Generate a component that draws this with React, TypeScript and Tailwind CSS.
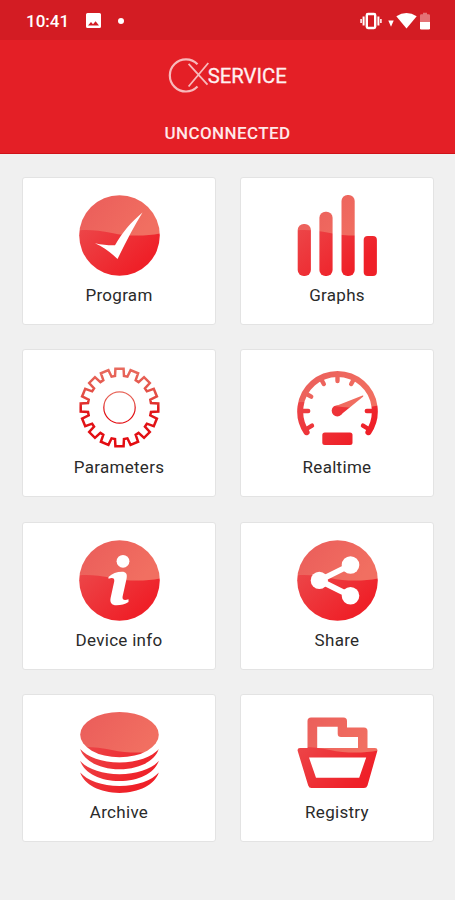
import { useId } from "react";
import type { ReactNode } from "react";

// Fills whatever the mask lets through with the two-tone red gloss.
function GlossIcon({ children }: { children: ReactNode }) {
  const id = useId();
  return (
    <svg width="81" height="81" viewBox="0 0 81 81" aria-hidden="true">
      <defs>
        <linearGradient id={`${id}base`} x1="0" y1="0.3" x2="0.6" y2="1">
          <stop offset="0" stopColor="#ec4a4c" />
          <stop offset="1" stopColor="#ef2028" />
        </linearGradient>
        <linearGradient id={`${id}shine`} x1="0" y1="0" x2="1" y2="0.4">
          <stop offset="0" stopColor="#ea5c5a" />
          <stop offset="1" stopColor="#f16f61" />
        </linearGradient>
        <mask id={`${id}mask`} maskUnits="userSpaceOnUse" x="0" y="0" width="81" height="81">
          {children}
        </mask>
      </defs>
      <g mask={`url(#${id}mask)`}>
        <rect width="81" height="81" fill={`url(#${id}base)`} />
        <path d="M0 0H81V38.5C66 41.5 48 41.3 33 38C20 35.3 8 34.5 0 35.5Z" fill={`url(#${id}shine)`} />
      </g>
    </svg>
  );
}

function ProgramIcon() {
  return (
    <GlossIcon>
      <circle cx="40.5" cy="40.5" r="40.3" fill="white" />
      <path d="M16 48.3C23 49.8 30 50.5 36 50.3C43 38 52 27 63.5 17.5C55 31 47 47 38.5 64C32 57.5 24 52 16 48.3Z" fill="black" />
    </GlossIcon>
  );
}

function GraphsIcon() {
  return (
    <GlossIcon>
      <g fill="white">
        <rect x="0.7" y="29" width="13.2" height="52" rx="6" />
        <rect x="22.4" y="16.7" width="13.2" height="64.3" rx="6" />
        <rect x="44.5" y="0" width="13.2" height="81" rx="6" />
        <rect x="66.7" y="41" width="13.2" height="40" rx="4" />
      </g>
    </GlossIcon>
  );
}

const TEETH = 16;

const gearPoints = Array.from({ length: TEETH }, (_, i) => {
  const step = 360 / TEETH;
  const at = (deg: number, r: number) => {
    const a = ((i * step + deg - 90) * Math.PI) / 180;
    return `${(40.5 + r * Math.cos(a)).toFixed(2)},${(40.5 + r * Math.sin(a)).toFixed(2)}`;
  };
  return [at(-8.1, 31.8), at(-6, 39), at(6, 39), at(8.1, 31.8)].join(" ");
}).join(" ");

function ParametersIcon() {
  return (
    <svg width="81" height="81" viewBox="0 0 81 81" aria-hidden="true">
      <defs>
        <linearGradient id="gear" x1="0" y1="0" x2="0" y2="1">
          <stop offset="0" stopColor="#e86a5e" />
          <stop offset="0.4" stopColor="#e2473f" />
          <stop offset="0.5" stopColor="#e0181b" />
          <stop offset="1" stopColor="#e30b10" />
        </linearGradient>
      </defs>
      <g fill="none" stroke="url(#gear)">
        <polygon points={gearPoints} strokeWidth="2.5" />
        <circle cx="40.5" cy="40.5" r="15.7" strokeWidth="1.2" />
      </g>
    </svg>
  );
}

function RealtimeIcon() {
  return (
    <GlossIcon>
      <g fill="none" stroke="white" strokeWidth="6" strokeLinecap="round">
        <path d="M9.6 65.2A37.3 37.3 0 1 1 71.4 65.2" />
        <g strokeWidth="4.4">
          <path d="M40.5 9V14M24.3 12.5L26.8 17M56.7 12.5L54.2 17M9.5 27L14.2 29.7M6 44H11.2M75 44H69.8M9.5 62L15 58.6M71.5 62L66 58.6" />
        </g>
      </g>
      <path d="M37 39.7L65.5 28.6Q67 28.5 66 29.7L43.5 48Z" fill="white" />
      <circle cx="40.3" cy="43.8" r="5.6" fill="white" />
      <rect x="25.3" y="65.5" width="30.2" height="12.5" rx="2.5" fill="white" />
    </GlossIcon>
  );
}

function DeviceInfoIcon() {
  return (
    <GlossIcon>
      <circle cx="40.5" cy="40.5" r="40.3" fill="white" />
      <circle cx="44" cy="21.3" r="6.4" fill="black" />
      <path
        d="M29.5 37C33 33.5 38 31.8 43 31.8C47 31.8 48.5 34 47.6 38.5L43.6 56.5C43 59.7 45 60.8 49.5 59.3V62C46 64.3 42 65.3 37.5 65.3C32.5 65.3 30.7 62.5 31.6 58L35.2 41.5C35.9 38 33.5 37.2 29.5 38.7Z"
        fill="black"
      />
    </GlossIcon>
  );
}

function ShareIcon() {
  return (
    <GlossIcon>
      <circle cx="40.5" cy="40.5" r="40.3" fill="white" />
      <path d="M53.5 25L22.5 40.4L53.5 55.8" fill="none" stroke="black" strokeWidth="5.8" />
      <g fill="black">
        <circle cx="22.3" cy="40.4" r="8.6" />
        <circle cx="53.5" cy="25" r="8.8" />
        <circle cx="53.5" cy="55.8" r="8.8" />
      </g>
    </GlossIcon>
  );
}

function ArchiveIcon() {
  return (
    <GlossIcon>
      <g fill="white">
        <ellipse cx="40.5" cy="22.7" rx="39.3" ry="22.6" />
        {[0, 11.8, 23.6].map((y) => (
          <path key={y} d="M1.2 37C8 45 23 50.4 40.5 50.4S73 45 79.8 37C76 49 60 57.3 40.5 57.3S5 49 1.2 37Z" transform={`translate(0 ${y})`} />
        ))}
      </g>
    </GlossIcon>
  );
}

function RegistryIcon() {
  return (
    <GlossIcon>
      <path
        d="M10.5 37V9Q10.5 5.5 14 5.5H46.5Q50 5.5 50 9V15.5H67Q70.5 15.5 70.5 19V37H61V25H44Q40.7 25 40.7 21.7V14.8H20.2V37Z"
        fill="white"
      />
      <path
        d="M3 36H78Q81 36 80.3 39L70.5 73.5Q69.6 76 67 76H14.5Q12 76 11.2 73.5L.7 39Q0 36 3 36ZM12 45.5L19 65.8H62.2L69.2 45.5Z"
        fill="white"
        fillRule="evenodd"
      />
    </GlossIcon>
  );
}

const menu = [
  { label: "Program", icon: <ProgramIcon /> },
  { label: "Graphs", icon: <GraphsIcon /> },
  { label: "Parameters", icon: <ParametersIcon /> },
  { label: "Realtime", icon: <RealtimeIcon /> },
  { label: "Device info", icon: <DeviceInfoIcon /> },
  { label: "Share", icon: <ShareIcon /> },
  { label: "Archive", icon: <ArchiveIcon /> },
  { label: "Registry", icon: <RegistryIcon /> },
];

function StatusBar() {
  return (
    <div className="flex h-10 items-center bg-[#d31c23] pl-[26px] pr-6 pt-px text-white">
      <span className="pt-px text-[17px] font-medium leading-none">10:41</span>
      <svg className="ml-[17px]" width="16" height="16" viewBox="0 0 16 16" aria-hidden="true">
        <path d="M1.5 0H13.5Q15 0 15 1.5V13.5Q15 15 13.5 15H1.5Q0 15 0 13.5V1.5Q0 0 1.5 0ZM2 12.6H13L9.6 8.2L7 11.2L5 9Z" fill="white" fillRule="evenodd" />
      </svg>
      <span className="ml-4 size-[6px] rounded-full bg-white" />
      <svg className="ml-auto" width="22" height="18" viewBox="0 0 22 18" aria-hidden="true">
        <g fill="none" stroke="white">
          <rect x="6.8" y="2" width="8.4" height="14" rx="1.2" strokeWidth="2.4" />
          <path d="M3.6 4.5V13.5M18.4 4.5V13.5" strokeWidth="2" />
          <path d="M1.1 7V11M20.9 7V11" strokeWidth="1.5" />
        </g>
      </svg>
      <svg className="ml-[6px]" width="29" height="18" viewBox="0 0 29 18" fill="white" aria-hidden="true">
        <path d="M.3 8.5H5.7L3 14.8Z" />
        <path d="M8.3 4.3Q18.5-2.3 28.7 4.3L18.5 16.5Z" />
      </svg>
      <svg className="ml-[3px] mr-px" width="10" height="18" viewBox="0 0 10 18" fill="white" aria-hidden="true">
        <path d="M0 3.5Q0 2.2 1.3 2.2H3V.8H7V2.2H8.7Q10 2.2 10 3.5V10H0Z" opacity="0.38" />
        <path d="M0 10H10V16.2Q10 17.5 8.7 17.5H1.3Q0 17.5 0 16.2Z" />
      </svg>
    </div>
  );
}

function Header() {
  return (
    <header className="flex h-[114px] flex-col items-center border-b border-[#cf1218] bg-[#e41f26] pt-4 text-white">
      <svg width="129" height="38" viewBox="-4 0 129 38" aria-hidden="true">
        <g fill="none" stroke="#f8b9bb">
          <path d="M30.5 8.2A16.1 16.1 0 1 0 30.5 30.6" strokeWidth="2.2" />
          <path d="M21.6 7.8L40.5 28.6M41.3 7L21.6 30.5" strokeWidth="1.8" />
        </g>
        <text
          x="40.7"
          y="26.7"
          textLength="79"
          lengthAdjust="spacingAndGlyphs"
          fill="#fff0f0"
          stroke="#fff0f0"
          strokeWidth="0.3"
          className="font-[Roboto,sans-serif] text-[21px]"
        >
          SERVICE
        </text>
      </svg>
      <p className="mt-[27px] text-[17px] font-medium leading-[24px] tracking-[0.4px] text-[#ffe9e9]">UNCONNECTED</p>
    </header>
  );
}

export default function App() {
  return (
    <div className="flex h-[900px] w-[455px] flex-col bg-[#f0f0f0] font-[Roboto,sans-serif]">
      <StatusBar />
      <Header />
      <main className="grid grid-cols-2 gap-x-6 gap-y-[24.3px] pl-[22px] pr-[21px] pt-[23px]">
        {menu.map(({ label, icon }) => (
          <button
            key={label}
            className="flex h-[148px] flex-col items-center rounded-[3px] border-[1.5px] border-[#e3e3e3] bg-white pt-[17px]"
          >
            {icon}
            <span className="mt-[7px] text-[17px] leading-[24px] tracking-[0.3px] text-[#2a2a2a]">{label}</span>
          </button>
        ))}
      </main>
    </div>
  );
}
